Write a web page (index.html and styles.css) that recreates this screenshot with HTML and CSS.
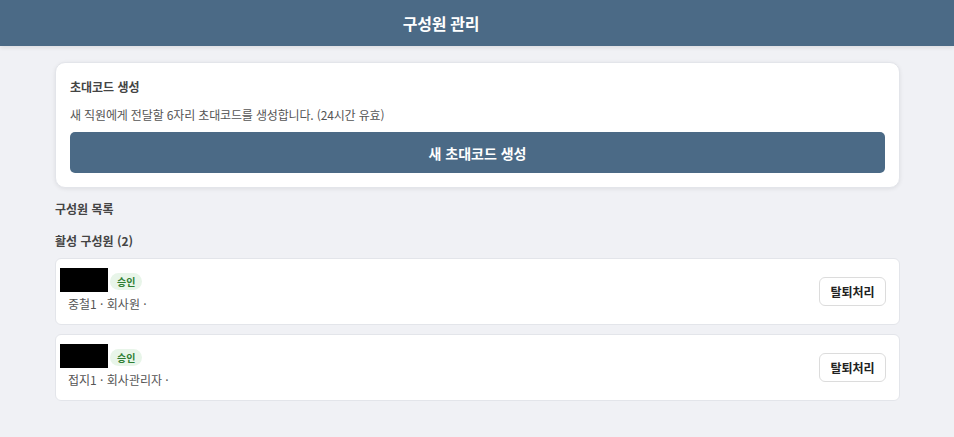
FILE: index.html
```html
<!DOCTYPE html>
<html lang="ko">
<head>
<meta charset="utf-8">
<link rel="stylesheet" href="styles.css">
</head>
<body>
<header class="topbar"><h1 class="title">구성원 관리</h1></header>
<main class="content">
  <section class="invite-card">
    <h2 class="card-title">초대코드 생성</h2>
    <p class="card-desc">새 직원에게 전달할 6자리 초대코드를 생성합니다. (24시간 유효)</p>
    <button class="primary-btn">새 초대코드 생성</button>
  </section>
  <h3 class="section-title">구성원 목록</h3>
  <h3 class="section-title sub">활성 구성원 (2)</h3>
  <div class="member-list">
    <div class="member">
      <div class="member-info">
        <div class="name-row"><span class="redact"></span><span class="badge">승인</span></div>
        <div class="meta">중철1 · 회사원 ·</div>
      </div>
      <button class="leave-btn">탈퇴처리</button>
    </div>
    <div class="member">
      <div class="member-info">
        <div class="name-row"><span class="redact"></span><span class="badge">승인</span></div>
        <div class="meta">접지1 · 회사관리자 ·</div>
      </div>
      <button class="leave-btn">탈퇴처리</button>
    </div>
  </div>
</main>
</body>
</html>
```

FILE: styles.css
```css
* { box-sizing: border-box; }
html, body { margin: 0; padding: 0; }
body {
  background: #f0f1f5;
  font-family: "Noto Sans CJK KR", "Noto Sans", sans-serif;
  color: #333;
}
.topbar {
  height: 46px;
  background: #4b6a86;
  display: flex;
  align-items: center;
  justify-content: center;
  padding-right: 72px;
  box-shadow: 0 2px 4px rgba(0,0,0,0.08);
}
.title {
  margin: 0;
  color: #fff;
  font-size: 16px;
  font-weight: 700;
  line-height: 1;
  letter-spacing: -0.3px;
}
.content {
  width: 845px;
  margin: 16px 0 0 55px;
}
.invite-card {
  background: #fff;
  border-radius: 10px;
  border: 1px solid #e3e5ea;
  box-shadow: 0 1px 4px rgba(0,0,0,0.08);
  padding: 15px 14px 14px;
}
.card-title {
  margin: 0;
  font-size: 12px;
  font-weight: 700;
  color: #444;
  line-height: 17px;
}
.card-desc {
  margin: 11px 0 0;
  font-size: 12px;
  color: #555;
  line-height: 17px;
  letter-spacing: -0.15px;
}
.primary-btn {
  display: block;
  width: 100%;
  height: 41px;
  margin-top: 9px;
  border: none;
  border-radius: 5px;
  background: #4b6a86;
  color: #fff;
  font-family: inherit;
  font-size: 14px;
  font-weight: 700;
}
.section-title {
  margin: 12px 0 0;
  font-size: 12px;
  font-weight: 700;
  color: #444;
  line-height: 17px;
}
.section-title.sub { margin-top: 15px; }
.member-list {
  margin-top: 9px;
  display: flex;
  flex-direction: column;
  gap: 9px;
}
.member {
  background: #fff;
  border: 1px solid #e3e5ea;
  border-radius: 6px;
  height: 67px;
  padding: 0 13px 0 4px;
  display: flex;
  align-items: center;
}
.member-info {
  flex: 1;
  align-self: flex-start;
  padding-top: 9px;
}
.name-row {
  display: flex;
  align-items: flex-end;
  gap: 2px;
}
.redact {
  display: block;
  width: 48px;
  height: 24px;
  background: #000;
}
.badge {
  display: inline-block;
  background: #e8f5e9;
  color: #2e7d32;
  font-size: 10px;
  font-weight: 700;
  line-height: 17px;
  height: 17px;
  padding: 0 7px;
  border-radius: 9px;
  margin-bottom: 2px;
}
.meta {
  margin-top: 3px;
  padding-left: 8px;
  font-size: 12px;
  line-height: 17px;
  color: #555;
}
.leave-btn {
  width: 67px;
  height: 29px;
  background: #fff;
  border: 1px solid #dcdcdc;
  border-radius: 6px;
  font-family: inherit;
  font-size: 12px;
  font-weight: 700;
  color: #222;
  margin-top: -1px;
}
```
